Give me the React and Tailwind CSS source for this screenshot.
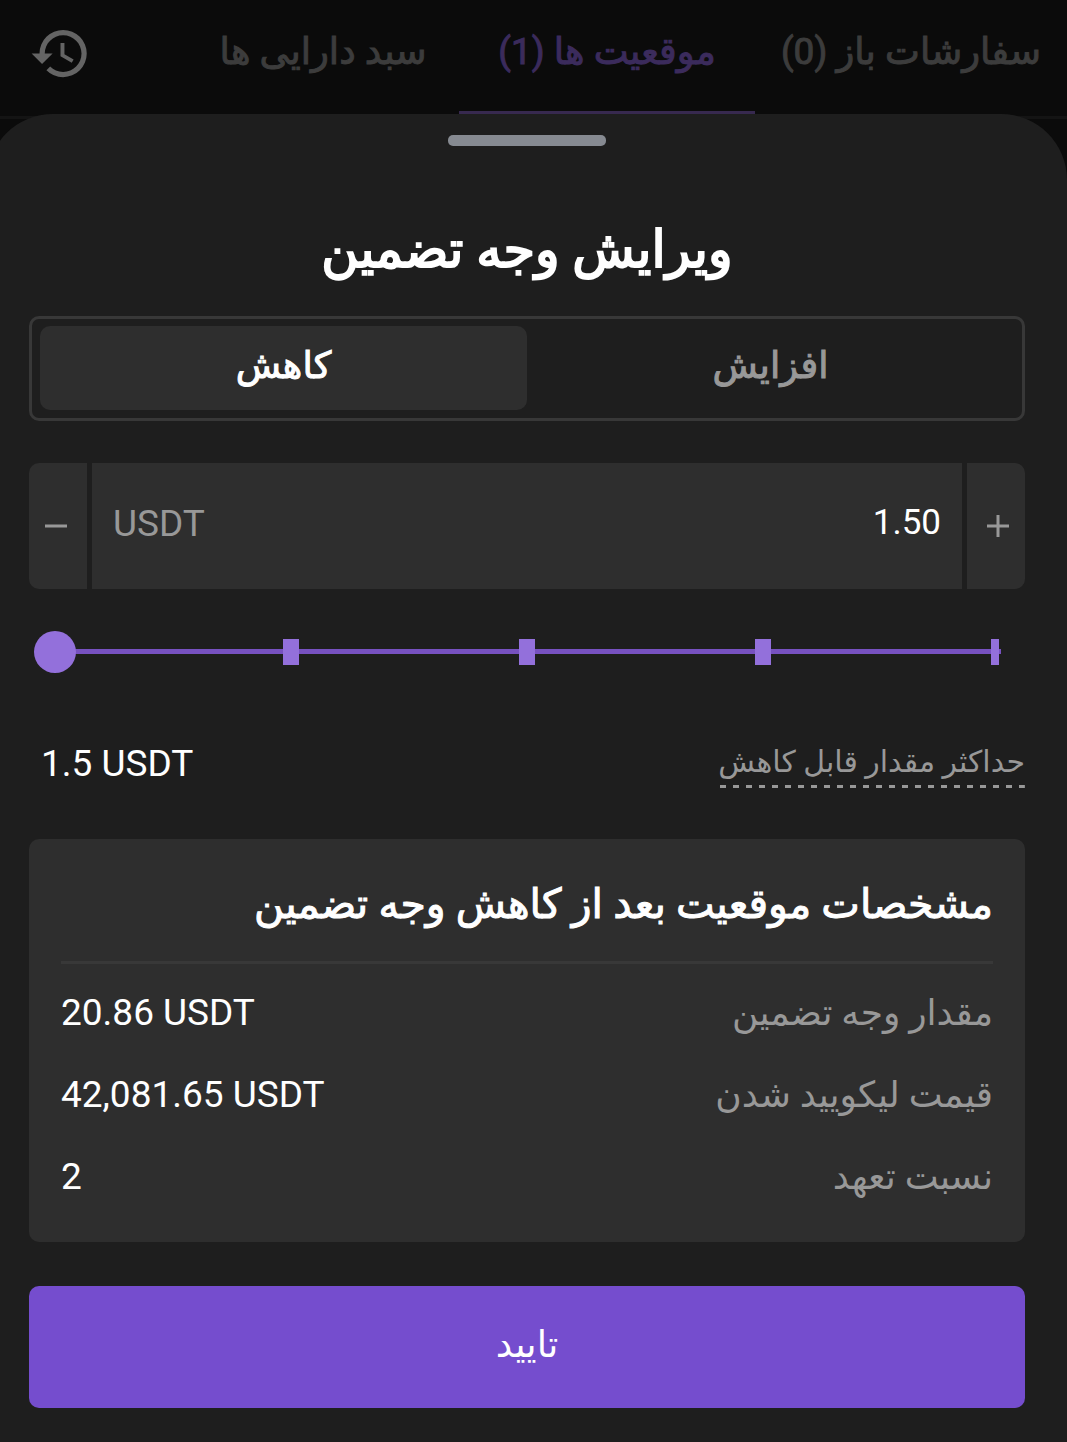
import { useState } from "react";

const tabs = [
  { id: "orders", label: "سفارشات باز (0)", width: "w-[312px]" },
  { id: "positions", label: "موقعیت ها (1)", width: "w-[296px]" },
  { id: "assets", label: "سبد دارایی ها", width: "w-[272px]" },
];

const details = [
  { label: "مقدار وجه تضمین", value: "20.86 USDT" },
  { label: "قیمت لیکویید شدن", value: "42,081.65 USDT" },
  { label: "نسبت تعهد", value: "2" },
];

function HistoryIcon() {
  return (
    <svg viewBox="0 0 24 24" className="size-[63px]" fill="currentColor" aria-hidden="true">
      <path d="M13 3a9 9 0 0 0-9 9H1l3.89 3.89.07.14L9 12H6c0-3.87 3.13-7 7-7s7 3.13 7 7-3.13 7-7 7c-1.93 0-3.68-.79-4.94-2.06l-1.42 1.42A8.954 8.954 0 0 0 13 21a9 9 0 0 0 0-18zm-1 5v5l4.28 2.54.72-1.21-3.5-2.08V8H12z" />
    </svg>
  );
}

function Header({ active, onSelect }) {
  return (
    <header className="flex h-[119px] items-start border-b-3 border-[#141414] bg-[#0b0b0b]">
      <nav className="flex">
        {tabs.map((tab) => (
          <button
            key={tab.id}
            type="button"
            onClick={() => onSelect(tab.id)}
            className={
              "h-[114px] border-b-3 pb-2 text-[37px] leading-[96px] whitespace-nowrap [-webkit-text-stroke:1px] " +
              tab.width +
              (active === tab.id
                ? " border-[#37294f] text-[#3b2b5c]"
                : " border-transparent text-[#3c3c3c]")
            }
          >
            {tab.label}
          </button>
        ))}
      </nav>
      <button type="button" aria-label="تاریخچه" className="mt-[22px] mr-auto ml-[29px] text-[#646464]">
        <HistoryIcon />
      </button>
    </header>
  );
}

function ModeSwitch({ mode, onChange }) {
  const base = "h-[84px] flex-1 rounded-[10px] pb-1 text-[37px] [-webkit-text-stroke:1px] ";
  return (
    <div className="mt-7 flex rounded-[10px] border-3 border-[#383838] px-2 pt-[7px] pb-2">
      {[
        { id: "increase", label: "افزایش" },
        { id: "decrease", label: "کاهش" },
      ].map((item) => (
        <button
          key={item.id}
          type="button"
          onClick={() => onChange(item.id)}
          className={base + (mode === item.id ? "bg-[#2e2e2e] text-white" : "text-[#989898]")}
        >
          {item.label}
        </button>
      ))}
    </div>
  );
}

function AmountField({ amount, onChange }) {
  const step = (delta) =>
    onChange(Math.max(0, (parseFloat(amount) || 0) + delta).toFixed(2));
  const side = "flex w-[58px] items-center justify-center bg-[#2e2e2e] text-[#989898] ";
  return (
    <div dir="ltr" className="mt-[42px] flex h-[126px] gap-[5px]">
      <button type="button" aria-label="کم کردن" onClick={() => step(-0.1)} className={side + "rounded-l-[10px] pr-1"}>
        <svg viewBox="0 0 22 22" className="size-[22px]" stroke="currentColor" strokeWidth="3" aria-hidden="true">
          <path d="M0 11h22" />
        </svg>
      </button>
      <label className="flex min-w-0 flex-1 items-center bg-[#2e2e2e] px-[21px] pb-[5px]">
        <span className="text-[37px] text-[#989898]">USDT</span>
        <input
          value={amount}
          onChange={(e) => onChange(e.target.value)}
          inputMode="decimal"
          className="min-w-0 flex-1 bg-transparent text-right text-[35px] text-white outline-none"
        />
      </label>
      <button type="button" aria-label="زیاد کردن" onClick={() => step(0.1)} className={side + "rounded-r-[10px] pl-1"}>
        <svg viewBox="0 0 22 22" className="size-[22px]" stroke="currentColor" strokeWidth="3" aria-hidden="true">
          <path d="M0 11h22M11 0v22" />
        </svg>
      </button>
    </div>
  );
}

function PercentSlider({ value, onChange }) {
  return (
    <div dir="ltr" className="relative mx-[5px] mt-[42px] h-[42px]">
      <div className="absolute inset-y-0 right-[19px] left-[21px] flex items-center pb-px">
        <div className="h-[5px] w-full bg-[#7751c0]" />
      </div>
      <div className="absolute inset-y-0 right-[21px] left-[21px] flex items-center justify-between">
        <span className="w-0" />
        {[25, 50, 75].map((mark) => (
          <span key={mark} className="flex w-0 justify-center">
            <span className="h-[26px] w-4 shrink-0 bg-[#9370db]" />
          </span>
        ))}
        <span className="flex w-0 justify-end">
          <span className="h-[26px] w-2 shrink-0 bg-[#9370db]" />
        </span>
      </div>
      <input
        type="range"
        min="0"
        max="100"
        value={value}
        onChange={(e) => onChange(Number(e.target.value))}
        aria-label="درصد"
        className="relative block h-[42px] w-full cursor-pointer appearance-none bg-transparent outline-none [&::-webkit-slider-thumb]:size-[42px] [&::-webkit-slider-thumb]:appearance-none [&::-webkit-slider-thumb]:rounded-full [&::-webkit-slider-thumb]:bg-[#9370db]"
      />
    </div>
  );
}

export default function App() {
  const [tab, setTab] = useState("positions");
  const [mode, setMode] = useState("decrease");
  const [amount, setAmount] = useState("1.50");
  const [percent, setPercent] = useState(0);

  return (
    <div
      dir="rtl"
      className="flex min-h-screen flex-col overflow-hidden bg-[#0b0b0b] font-['Roboto','DejaVu_Sans',sans-serif]"
    >
      <Header active={tab} onSelect={setTab} />
      <main className="relative -mt-[5px] -ml-[13px] flex-1 rounded-t-[66px] bg-[#1e1e1e] px-[42px] pt-[21px] pb-[34px]">
        <div className="mx-auto h-[11px] w-[158px] rounded-[5px] bg-[#868a91]" />
        <h1 className="mt-[66px] text-center text-[51px] leading-[76px] text-white [-webkit-text-stroke:2px]">
          ویرایش وجه تضمین
        </h1>
        <ModeSwitch mode={mode} onChange={setMode} />
        <AmountField amount={amount} onChange={setAmount} />
        <PercentSlider value={percent} onChange={setPercent} />

        <div className="mt-[66px] flex items-start justify-between">
          <span className="bg-[repeating-linear-gradient(to_left,#989898_0_6px,transparent_6px_13px)] bg-[length:100%_3px] bg-bottom bg-no-repeat pb-1 text-[30px] leading-[45px] text-[#989898]">
            حداکثر مقدار قابل کاهش
          </span>
          <span dir="ltr" className="pl-3 text-[37px] leading-[50px] text-white">1.5 USDT</span>
        </div>

        <section className="mt-[50px] rounded-[10px] bg-[#2e2e2e] px-8 pt-8 pb-6">
          <h2 className="border-b-3 border-[#383838] pb-6 text-[41px] leading-[66px] text-white [-webkit-text-stroke:1px]">
            مشخصات موقعیت بعد از کاهش وجه تضمین
          </h2>
          <dl className="pt-2">
            {details.map((row) => (
              <div key={row.label} className="flex h-[82px] items-center justify-between">
                <dt className="text-[36px] text-[#989898]">{row.label}</dt>
                <dd dir="ltr" className="text-[37px] text-white">{row.value}</dd>
              </div>
            ))}
          </dl>
        </section>

        <button type="button" className="mt-[44px] h-[122px] w-full rounded-[10px] bg-[#754dce] pb-1 text-[37px] text-white">
          تایید
        </button>
      </main>
    </div>
  );
}
